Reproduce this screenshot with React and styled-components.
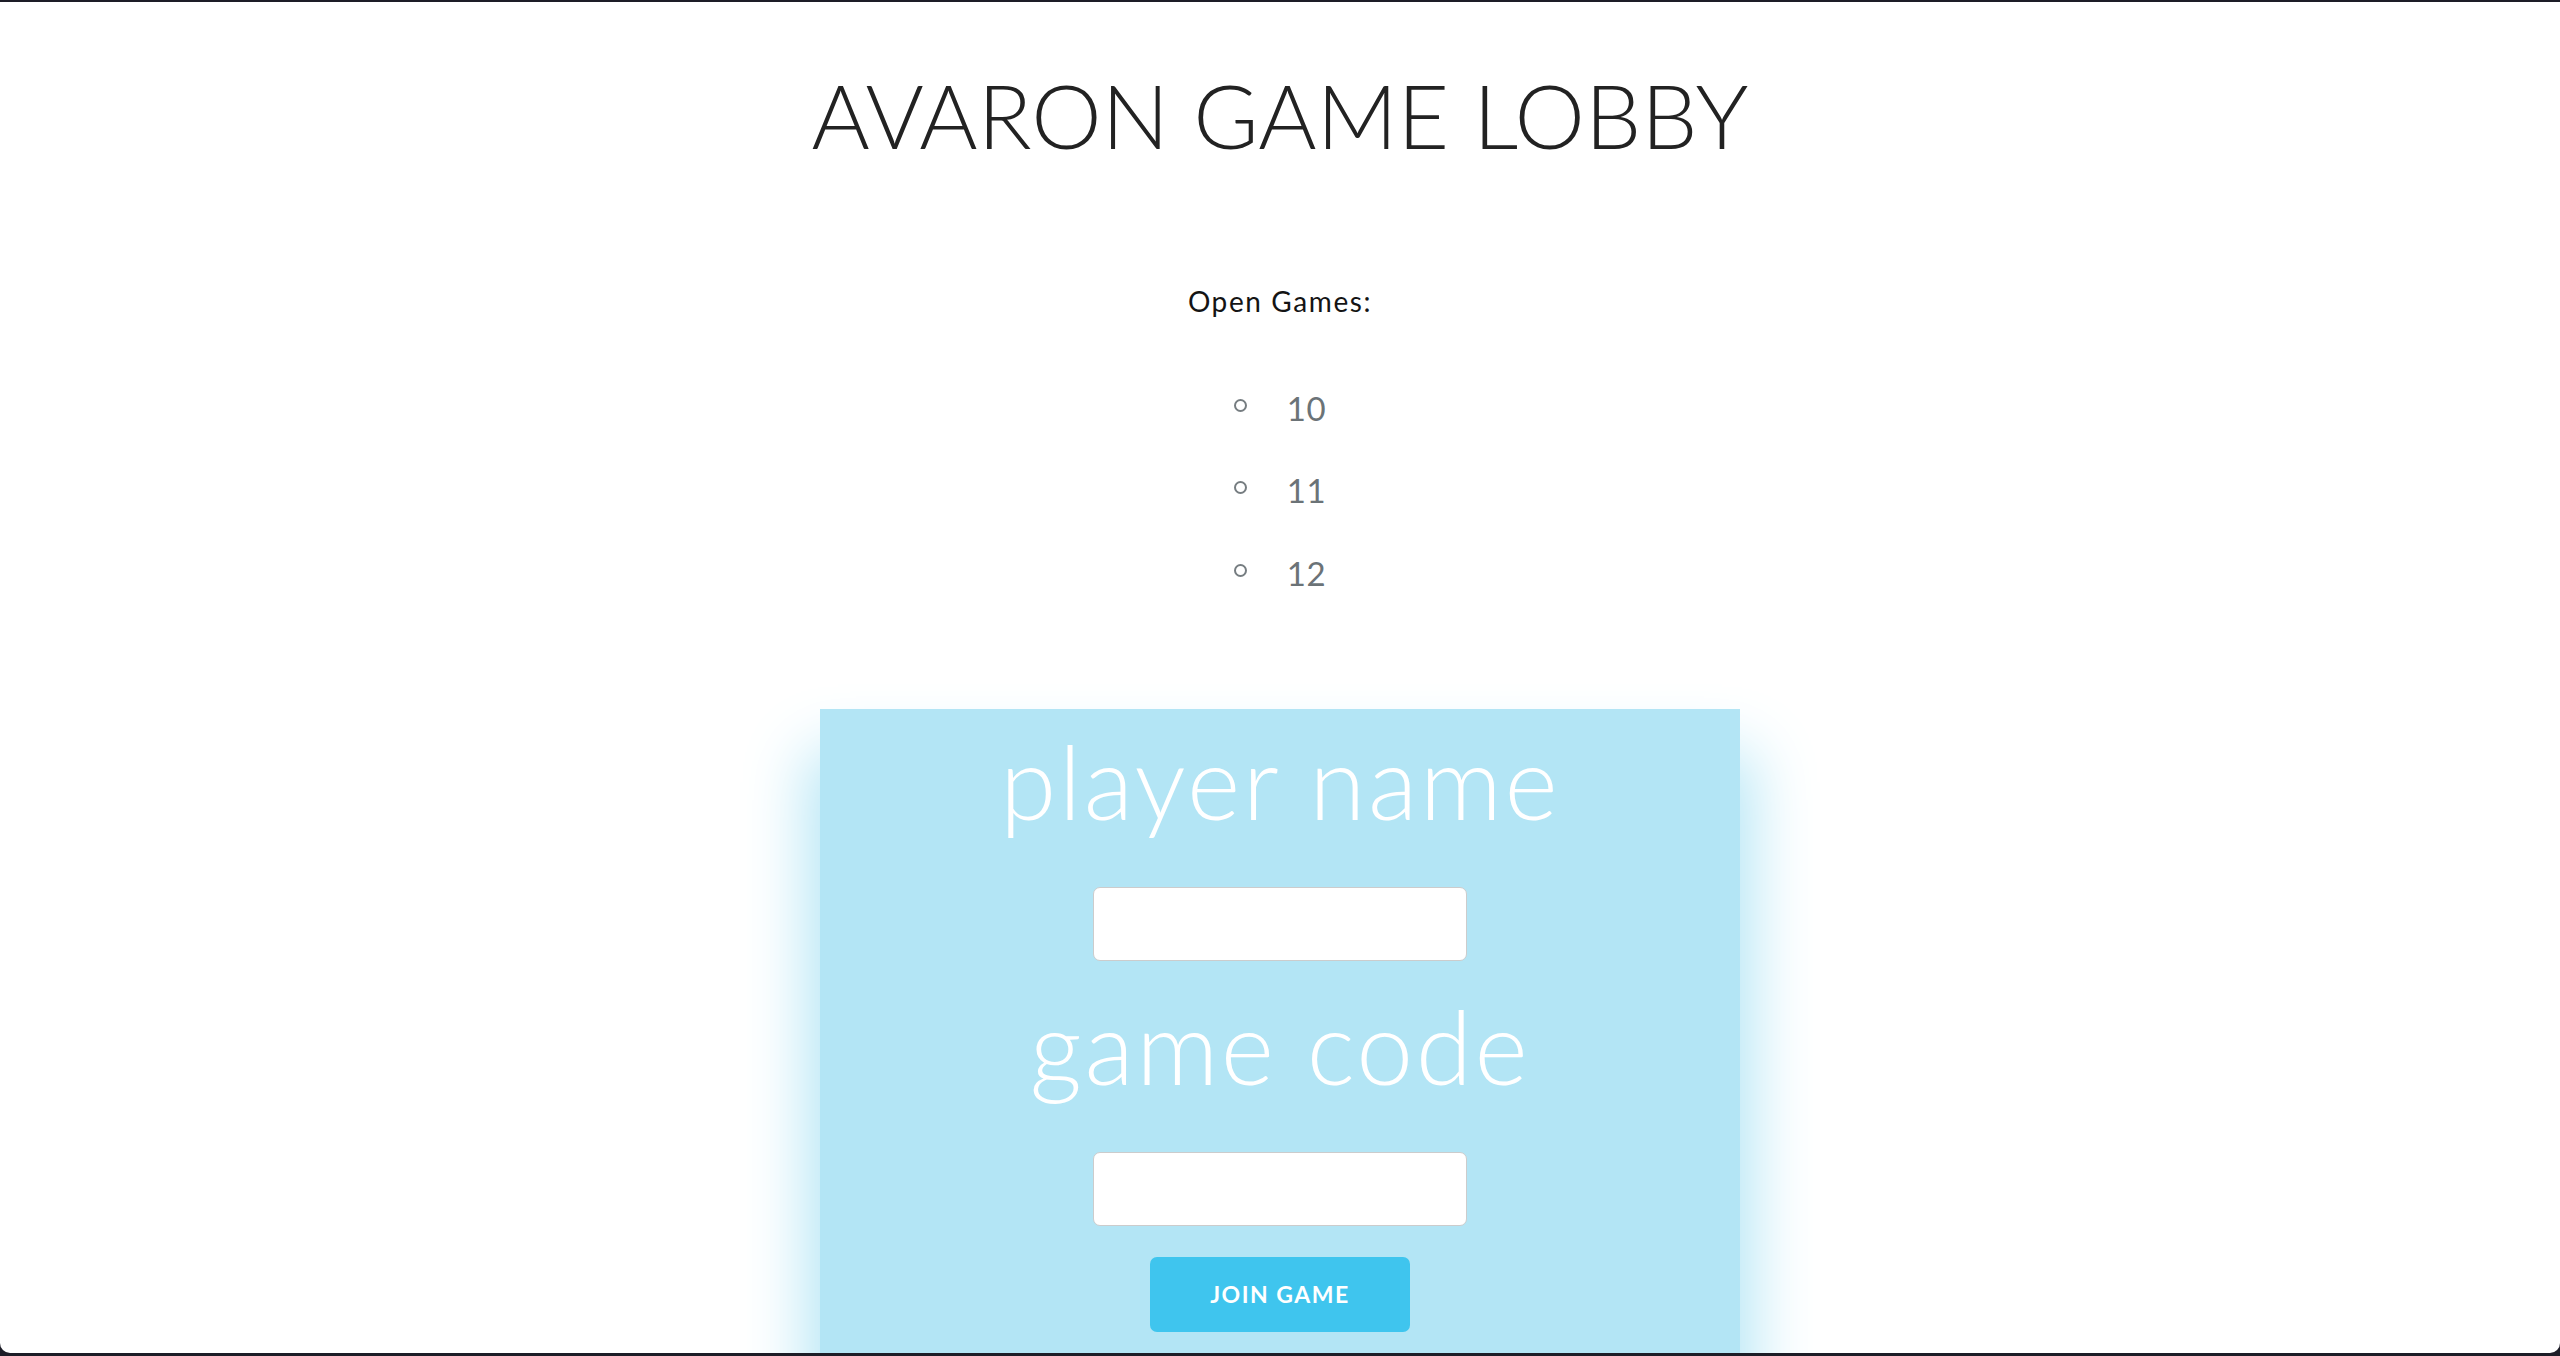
import React from 'react'
import styled, { createGlobalStyle } from 'styled-components'

const GlobalStyle = createGlobalStyle`
    html, body {
        margin: 0;
        padding: 0;
        background: #1d1d27;
    }
    * {
        box-sizing: border-box;
    }
`

const games = [10, 11, 12]

const App = () => {
    return (
        <Frame>
            <GlobalStyle />
            <Page>
                <Title>AVARON GAME LOBBY</Title>
                <OpenLabel>Open Games:</OpenLabel>
                <GameList>
                    {games.map((g) => (
                        <GameItem key={g}>
                            <Bullet />
                            <GameNumber>{g}</GameNumber>
                        </GameItem>
                    ))}
                </GameList>

                <JoinBox>
                    <BoxLabel>player name</BoxLabel>
                    <TextInput type="text" />
                    <BoxLabel $gap="34px">game code</BoxLabel>
                    <TextInput type="text" />
                    <JoinButton>JOIN GAME</JoinButton>
                </JoinBox>
            </Page>
        </Frame>
    )
}

const Frame = styled.div`
    height: 100vh;
    padding: 2px 0 3px;
    display: flex;
    flex-direction: column;
    background: #1d1d27;
`

const Page = styled.main`
    flex: 1;
    min-height: 0;
    overflow: hidden;
    background: #ffffff;
    border-radius: 0 0 10px 10px;
    display: flex;
    flex-direction: column;
    align-items: center;
    padding-top: 68px;
    font-family: Lato, "Open Sans", sans-serif;
    text-align: center;
`

const Title = styled.h1`
    margin: 0;
    font-size: 89px;
    line-height: 1;
    font-weight: 300;
    color: #222222;
`

const OpenLabel = styled.h3`
    margin: 128px 0 0;
    font-size: 28px;
    line-height: 1;
    font-weight: 400;
    color: #141414;
    letter-spacing: 1.6px;
`

const GameList = styled.ul`
    list-style: none;
    margin: 52px 0 0;
    padding: 0;
    display: flex;
    flex-direction: column;
    align-items: center;
`

const GameItem = styled.li`
    display: flex;
    align-items: center;
    gap: 40px;
    height: 82.5px;
`

const Bullet = styled.span`
    width: 13px;
    height: 13px;
    border: 2px solid #767d81;
    border-radius: 50%;
    margin-top: -6px;
`

const GameNumber = styled.span`
    font-size: 33px;
    line-height: 1;
    color: #6b7377;
    letter-spacing: 0.5px;
`

const JoinBox = styled.section`
    margin-top: 94px;
    width: 920px;
    flex-shrink: 0;
    background: #b3e5f5;
    box-shadow: 0 55px 60px 12px #b3e5f5;
    display: flex;
    flex-direction: column;
    align-items: center;
    padding: 21px 0 60px;
`

const BoxLabel = styled.h2`
    margin: ${(p) => p.$gap || '0'} 0 0;
    font-size: 102px;
    line-height: 1;
    font-weight: 300;
    color: #ffffff;
    letter-spacing: 2.5px;
`

const TextInput = styled.input`
    margin-top: 55px;
    width: 374px;
    height: 74px;
    border: 1.5px solid #cccccc;
    border-radius: 7px;
    background: #ffffff;
    outline: none;
    font-size: 24px;
    padding: 0 12px;
`

const JoinButton = styled.button`
    margin-top: 31px;
    width: 260px;
    height: 75px;
    border: none;
    border-radius: 7px;
    background: #3fc5ee;
    color: #ffffff;
    font-family: Lato, sans-serif;
    font-weight: 700;
    font-size: 23px;
    letter-spacing: 1.5px;
    cursor: pointer;
`

export default App
